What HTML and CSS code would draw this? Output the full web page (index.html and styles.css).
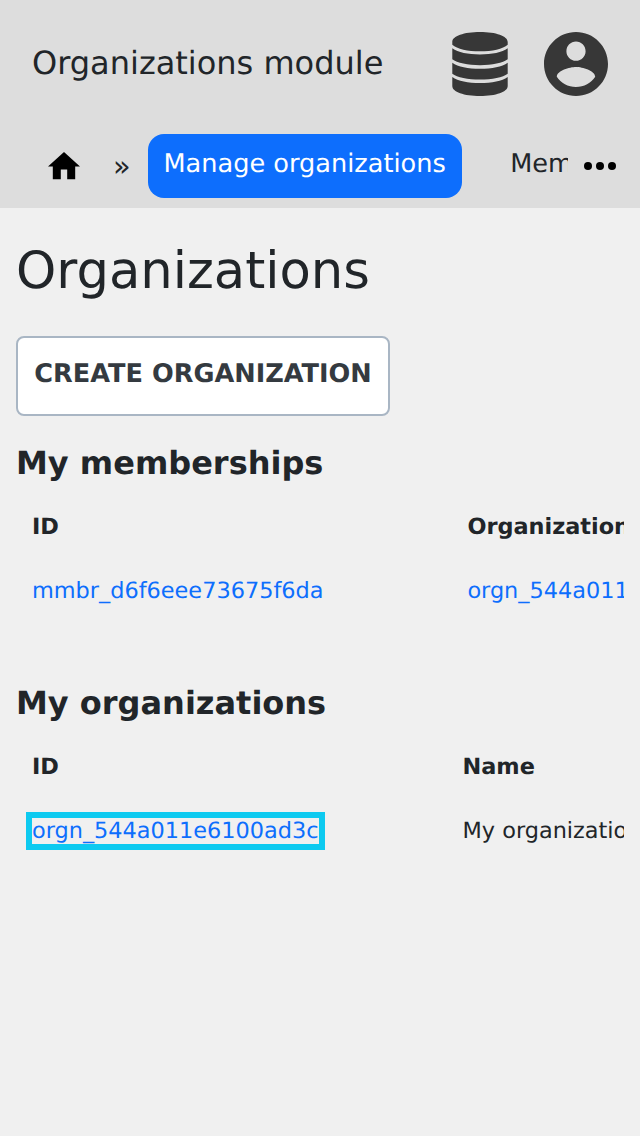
FILE: index.html
```html
<!DOCTYPE html>
<html lang="en">
<head>
<meta charset="utf-8">
<title>Organizations module</title>
<link rel="stylesheet" href="styles.css">
</head>
<body>
<header class="header">
  <div class="topbar">
    <div class="brand">Organizations module</div>
    <svg class="icon-db" viewBox="0 0 56 64"><path d="M.3 10C.3 4 12 0 28 0s27.700 4 27.700 10v2.700C51 17 40 19.300 28 19.300S5 17 .3 12.700zM.3 16.300C6 20.500 16 22.400 28 22.400s22-1.900 27.700-6.100v11C51 31 40 33.200 28 33.200S5 31 .3 27.300zM.3 30.700C6 34.900 16 36.800 28 36.800s22-1.900 27.700-6.100v11C51 45.500 40 47.600 28 47.600S5 45.500 .3 41.700zM.3 45C6 49.200 16 51 28 51s22-1.800 27.700-6v9c0 6-11.700 10-27.700 10S.3 60 .3 54z"/></svg>
    <svg class="icon-user" viewBox="2 2 20 20"><path d="M12 2C6.480 2 2 6.480 2 12s4.480 10 10 10 10-4.480 10-10S17.520 2 12 2zm0 3c1.660 0 3 1.340 3 3s-1.340 3-3 3-3-1.340-3-3 1.340-3 3-3zm0 14.200c-2.500 0-4.710-1.280-6-3.220.03-1.990 4-3.080 6-3.080 1.990 0 5.970 1.090 6 3.080-1.290 1.940-3.500 3.220-6 3.220z"/></svg>
  </div>
  <nav class="nav">
    <svg class="icon-home" viewBox="2 3 20 17"><path d="M10 20v-6h4v6h5v-8h3L12 3 2 12h3v8z"/></svg>
    <span class="separator">»</span>
    <a class="tab active">Manage organizations</a>
    <a class="tab clipped">Members</a>
    <svg class="icon-more" viewBox="0 0 32 8"><circle cx="4" cy="4" r="4"/><circle cx="16" cy="4" r="4"/><circle cx="28" cy="4" r="4"/></svg>
  </nav>
</header>
<main class="main">
  <h1 class="title">Organizations</h1>
  <button class="create">CREATE ORGANIZATION</button>
  <h2 class="subtitle">My memberships</h2>
  <div class="table memberships">
    <div class="cell head">ID</div><div class="cell head">Organization</div>
    <div class="cell"><a class="link">mmbr_d6f6eee73675f6da</a></div><div class="cell"><a class="link">orgn_544a011e6100ad3c</a></div>
  </div>
  <h2 class="subtitle">My organizations</h2>
  <div class="table organizations">
    <div class="cell head">ID</div><div class="cell head">Name</div>
    <div class="cell"><a class="link focused">orgn_544a011e6100ad3c</a></div><div class="cell">My organization</div>
  </div>
</main>
</body>
</html>
```
FILE: styles.css
```css
* { box-sizing: border-box; }
body { margin: 0; min-height: 1136px; background: #f0f0f0; color: #212529; font-family: "DejaVu Sans", sans-serif; text-rendering: geometricPrecision; overflow: hidden; }
svg { display: block; flex: none; }
.header { height: 208px; background: #dddddd; }
.topbar { height: 128px; display: flex; align-items: center; padding: 0 32px; }
.brand { flex: 1; padding-bottom: 2px; font-size: 32px; line-height: 48px; white-space: nowrap; }
.icon-db { width: 56px; height: 64px; fill: #373737; margin-right: 36px; }
.icon-user { width: 64px; height: 64px; fill: #373737; }
.nav { display: flex; height: 80px; padding: 6px 24px 0 48px; align-items: flex-start; }
.icon-home { width: 32px; height: 27.2px; margin-top: 18.4px; }
.separator { width: 18px; margin: 12px 17px 0 33px; font-size: 28.8px; line-height: 40px; }
.tab { height: 64px; padding: 11px 16px 0; font-size: 25.6px; line-height: 38px; white-space: nowrap; border-radius: 16px; }
.active { background: #0d6efd; color: #fff; width: 314px; flex: none; padding-left: 15.5px; }
.clipped { width: 58px; padding: 11px 0 0 0.25px; margin: 0 16px 0 48px; overflow: hidden; border-radius: 0; flex: none; }
.icon-more { width: 32px; height: 8px; margin-top: 28px; }
.main { padding: 32px 16px 0; }
.title { margin: 0 0 16px; padding-top: 1px; height: 80px; font-size: 51.2px; font-weight: 400; line-height: 61px; }
.create { display: block; width: 374px; height: 80px; padding: 0 0 4px; background: #fff; border: 2px solid #a9b6c4; border-radius: 8px; color: #343a40; font: bold 25.6px "DejaVu Sans", sans-serif; text-rendering: geometricPrecision; white-space: nowrap; }
.subtitle { margin: 28px 0 13px; font-size: 32px; line-height: 38px; }
.table { display: grid; grid-auto-rows: 64px; height: 161px; overflow: hidden; font-size: 22.4px; line-height: 34px; }
.memberships { grid-template-columns: 435.4px 400px; }
.organizations { grid-template-columns: 430.5px 400px; }
.cell { padding: 15px 16px; white-space: nowrap; }
.head { font-weight: 700; }
.link { color: #0d6efd; }
.focused { outline: 6px solid #0dcaf0; }
```
